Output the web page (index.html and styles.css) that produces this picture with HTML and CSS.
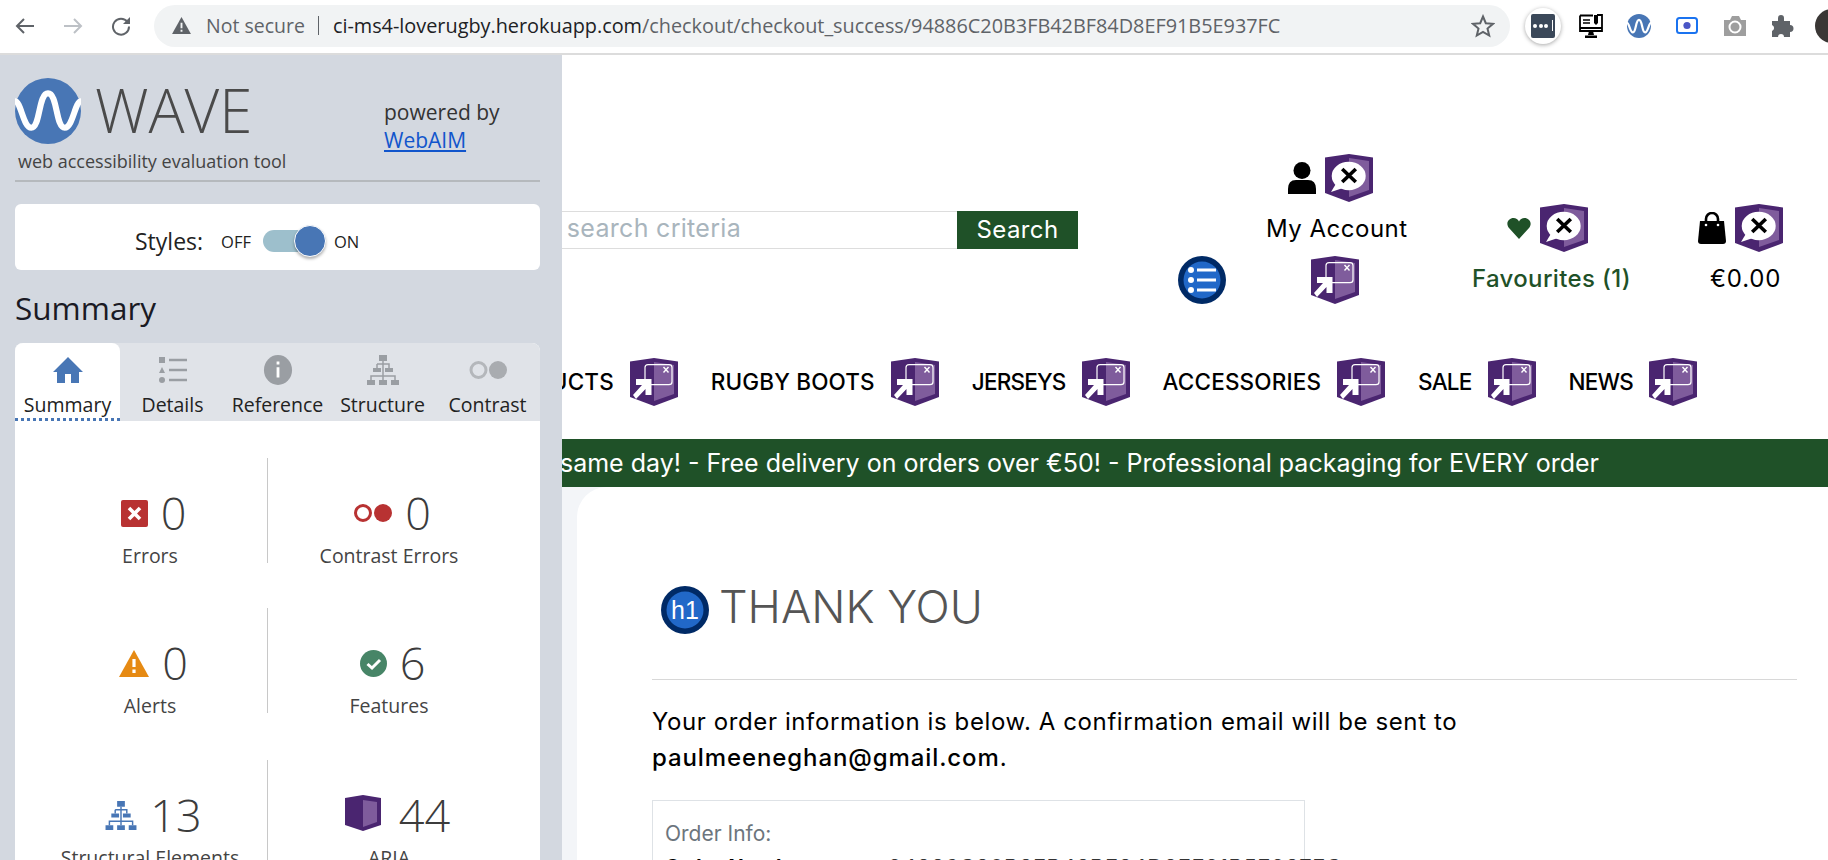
FILE: index.html
```html
<!DOCTYPE html>
<html lang="en">
<head>
<meta charset="UTF-8">
<meta name="viewport" content="width=device-width, initial-scale=1.0">
<title>Love Rugby - Checkout success</title>
<link rel="stylesheet" href="styles.css">
</head>
<body>

<svg class="defs" width="0" height="0">
    <symbol id="shield-alert" viewBox="0 0 48 48">
        <path d="M0 3.5 L24 0 L48 3.5 V39 L24 48 L0 39 Z" fill="#4a2570"/>
        <path d="M24 4 L44 7 V36 L24 43 Z" fill="#7f5c9c"/>
        <ellipse cx="23.7" cy="22" rx="17" ry="14.2" fill="#fff"/>
        <path d="M6 38 L12 28 L18 34 Z" fill="#fff"/>
        <path d="M17.2 15 L30.8 28 M30.8 15 L17.2 28" stroke="#000" stroke-width="3.6" fill="none"/>
    </symbol>
    <symbol id="shield-ext" viewBox="0 0 48 48">
        <path d="M0 3.5 L24 0 L48 3.5 V39 L24 48 L0 39 Z" fill="#4a2570"/>
        <path d="M24 4 L44 7 V36 L24 43 Z" fill="#7f5c9c"/>
        <path d="M15 21 V9.5 Q15 6.7 18 6.7 H39 Q42 6.7 42 9.5 V24 Q42 26.7 39 26.7 H21" stroke="#fff" stroke-width="1.2" fill="none"/>
        <path d="M33.5 9 L38.5 14.5 M38.5 9 L33.5 14.5" stroke="#fff" stroke-width="1.4" fill="none"/>
        <path d="M6 21 H21.5 V37 H15.5 V31 L6 41 L3 37 L12 27 H6 Z" fill="#fff"/>
    </symbol>
</svg>

<div class="toolbar">
    <svg class="nav-btn" viewBox="0 0 20 20"><path d="M19 10 H2 M9 3 L2 10 L9 17" stroke="#5f6368" stroke-width="2" fill="none"/></svg>
    <svg class="nav-btn" viewBox="0 0 20 20"><path d="M1 10 H18 M11 3 L18 10 L11 17" stroke="#bdc1c6" stroke-width="2" fill="none"/></svg>
    <svg class="nav-btn" viewBox="0 0 20 20"><path d="M16.5 6 A8 8 0 1 0 18 10.5" stroke="#5f6368" stroke-width="2" fill="none"/><path d="M19 1 V8 H12 Z" fill="#5f6368"/></svg>

    <div class="omnibox">
        <svg class="warn" viewBox="0 0 20 18"><path d="M10 0 L20 18 H0 Z" fill="#5f6368"/><path d="M9 6 H11 V12 H9 Z M9 13.5 H11 V15.5 H9 Z" fill="#f1f3f4"/></svg>
        <span class="not-secure">Not secure</span>
        <span class="url-sep"></span>
        <span class="url"><b>ci-ms4-loverugby.herokuapp.com</b>/checkout/checkout_success/94886C20B3FB42BF84D8EF91B5E937FC</span>
        <svg class="star" viewBox="0 0 24 24"><path d="M12 2.5 L14.8 9.2 L22 9.8 L16.5 14.5 L18.2 21.5 L12 17.8 L5.8 21.5 L7.5 14.5 L2 9.8 L9.2 9.2 Z" stroke="#5f6368" stroke-width="2" fill="none"/></svg>
    </div>

    <div class="ext-pass"><span class="pass-box"><i></i><i></i><i></i><em></em></span></div>
    <div class="ext">
        <svg width="24" height="24" viewBox="0 0 24 24"><path d="M1 1.5 H14 M18 1 H23 V17 H1 V1.5 M1 14 H23" stroke="#000" stroke-width="1.8" fill="none"/><path d="M4 6 H11 M4 9 H11" stroke="#000" stroke-width="1.3"/><path d="M15 1 H19 V9 L17 11 L15 9 Z" fill="#000"/><path d="M10 17 H14 L15 21 H9 Z M6 21.5 H18 V24 H6 Z" fill="#000"/></svg>
    </div>
    <div class="ext">
        <svg width="24" height="24" viewBox="0 0 65 65"><circle cx="32.5" cy="32.5" r="32.5" fill="#4876b5"/><path d="M0 24 C6 24 8 50 16 50 C25 50 23 16 32.5 16 C42 16 40 50 49 50 C57 50 59 24 65 24" stroke="#fff" stroke-width="6" fill="none"/></svg>
    </div>
    <div class="ext">
        <svg width="22" height="17" viewBox="0 0 22 17"><rect x="1" y="1" width="20" height="15" rx="2.5" fill="none" stroke="#1a73f0" stroke-width="2"/><circle cx="11" cy="8.5" r="3.6" fill="#4a56c6"/></svg>
    </div>
    <div class="ext">
        <svg width="22" height="20" viewBox="0 0 22 20"><path d="M0 4 H6 L8 0 H15 L17 4 H22 V20 H0 Z" fill="#9e9e9e"/><circle cx="11" cy="11" r="5.5" fill="none" stroke="#fff" stroke-width="2"/></svg>
    </div>
    <div class="ext">
        <svg width="22" height="22" viewBox="0 0 22 22"><path d="M0 6 H6 V3 A3 3 0 0 1 12 3 V6 H18 V10 A3 3 0 0 1 18 17 V22 H12 A3 3 0 0 0 6 22 H0 V16 A3.2 3.2 0 0 0 0 10 Z" fill="#5f6368"/></svg>
    </div>
    <div class="avatar"></div>
</div>

<div class="layout">
    <aside class="wave">
        <div class="brand">
            <div class="brand-left">
                <div class="logo-row">
                    <svg width="66" height="66" viewBox="0 0 65 65"><circle cx="32.5" cy="32.5" r="32.5" fill="#4876b5"/><path d="M0 23 C6 23 8 49 16 49 C25 49 23 15 32.5 15 C42 15 40 49 49 49 C57 49 59 23 65 23" stroke="#fff" stroke-width="6" fill="none"/></svg>
                    <span class="logo-text">WAVE</span>
                </div>
                <div class="tagline">web accessibility evaluation tool</div>
            </div>
            <div class="powered">powered by<br><a href="#">WebAIM</a></div>
        </div>

        <div class="styles-card">
            <span class="styles-label">Styles:</span>
            <span class="switch-text">OFF</span>
            <span class="track"><span class="knob"></span></span>
            <span class="switch-text">ON</span>
        </div>

        <h2 class="summary-title">Summary</h2>

        <div class="panel">
            <div class="tabs">
                <div class="tab active">
                    <svg width="30" height="26" viewBox="0 0 30 26"><path d="M15 0 L30 15 H26 V26 H18 V17 H12 V26 H4 V15 H0 Z" fill="#4876b5"/></svg>
                    <span>Summary</span>
                </div>
                <div class="tab">
                    <svg width="28" height="26" viewBox="0 0 28 26"><path d="M0 0 H6 V6 H0 Z M3 10 L6 16 H0 Z" fill="#9a9ea3"/><circle cx="3" cy="23" r="3" fill="#9a9ea3"/><path d="M10 3 H28 M10 13 H28 M10 23 H28" stroke="#9a9ea3" stroke-width="2.6"/></svg>
                    <span>Details</span>
                </div>
                <div class="tab">
                    <svg width="30" height="32" viewBox="0 0 30 32"><ellipse cx="15" cy="16" rx="15" ry="16" fill="#9a9ea3"/><path d="M13.5 7 H16.5 V10 H13.5 Z M13.5 13 H16.5 V24 H13.5 Z" fill="#fff"/></svg>
                    <span>Reference</span>
                </div>
                <div class="tab">
                    <svg width="32" height="30" viewBox="0 0 32 30"><path d="M12 0 H20 V6 H12 Z M6 13 H14 V17 H6 Z M18 13 H26 V17 H18 Z M0 25 H8 V30 H0 Z M12 25 H20 V30 H12 Z M24 25 H32 V30 H24 Z" fill="#9a9ea3"/><path d="M16 6 V25 M10 9 H22 V13 M10 9 V13 M4 25 V21 H28 V25" stroke="#9a9ea3" stroke-width="1.5" fill="none"/></svg>
                    <span>Structure</span>
                </div>
                <div class="tab">
                    <svg width="38" height="20" viewBox="0 0 38 20"><circle cx="9.5" cy="10" r="7.5" fill="none" stroke="#b4b7bb" stroke-width="3"/><circle cx="29" cy="10" r="9" fill="#a9acb0"/></svg>
                    <span>Contrast</span>
                </div>
            </div>

            <div class="stats">
                <div class="stat left">
                    <div class="stat-top">
                        <svg width="27" height="27" viewBox="0 0 27 27"><rect width="27" height="27" rx="2" fill="#b83232"/><path d="M8 8 L19 19 M19 8 L8 19" stroke="#fff" stroke-width="3.6"/></svg>
                        <span class="num">0</span>
                    </div>
                    <div class="stat-label">Errors</div>
                </div>
                <div class="stat right">
                    <div class="stat-top">
                        <svg width="38" height="20" viewBox="0 0 38 20"><circle cx="9" cy="10" r="7.5" fill="none" stroke="#b83232" stroke-width="3"/><circle cx="29" cy="10" r="9" fill="#b83232"/></svg>
                        <span class="num">0</span>
                    </div>
                    <div class="stat-label">Contrast Errors</div>
                </div>
                <div class="stat left">
                    <div class="stat-top">
                        <svg width="30" height="27" viewBox="0 0 30 27"><path d="M15 0 L30 27 H0 Z" fill="#e68a13"/><path d="M13.4 9 H16.6 V17 H13.4 Z M13.4 19.5 H16.6 V23 H13.4 Z" fill="#fff"/></svg>
                        <span class="num">0</span>
                    </div>
                    <div class="stat-label">Alerts</div>
                </div>
                <div class="stat right">
                    <div class="stat-top">
                        <svg width="27" height="27" viewBox="0 0 27 27"><circle cx="13.5" cy="13.5" r="13.5" fill="#478567"/><path d="M7.5 14 L12 18 L20 10" stroke="#fff" stroke-width="3" fill="none"/></svg>
                        <span class="num">6</span>
                    </div>
                    <div class="stat-label">Features</div>
                </div>
                <div class="stat left last">
                    <div class="stat-top">
                        <svg width="32" height="29" viewBox="0 0 32 30"><path d="M12 0 H20 V6 H12 Z M6 13 H14 V17 H6 Z M18 13 H26 V17 H18 Z M0 25 H8 V30 H0 Z M12 25 H20 V30 H12 Z M24 25 H32 V30 H24 Z" fill="#4876b5"/><path d="M16 6 V25 M10 9 H22 V13 M10 9 V13 M4 25 V21 H28 V25" stroke="#4876b5" stroke-width="1.5" fill="none"/></svg>
                        <span class="num">13</span>
                    </div>
                    <div class="stat-label">Structural Elements</div>
                </div>
                <div class="stat right last aria">
                    <div class="stat-top">
                        <svg width="36" height="36" viewBox="0 0 36 36"><path d="M0 3 L18 0 L36 3 V30 L18 36 L0 30 Z" fill="#4a2570"/><path d="M18 5 L32 7 V27 L18 32 Z" fill="#7f5c9c"/></svg>
                        <span class="num">44</span>
                    </div>
                    <div class="stat-label">ARIA</div>
                </div>
            </div>
        </div>
    </aside>

    <main class="site">
        <div class="head">
            <form class="search">
                <span class="search-input">Enter search criteria</span>
                <button class="search-btn" type="button">Search</button>
            </form>
            <div class="account">
                <div class="account-icons">
                    <svg width="28" height="32" viewBox="0 0 28 32"><circle cx="14" cy="8.5" r="8.5" fill="#000"/><path d="M0 32 V27 Q0 18 8 18 H20 Q28 18 28 27 V32 Z" fill="#000"/></svg>
                    <svg class="shield"><use href="#shield-alert"/></svg>
                </div>
                <div class="account-text">My Account</div>
                <div class="account-foot">
                    <svg width="48" height="48" viewBox="0 0 48 48"><circle cx="24" cy="24" r="24" fill="#002a66"/><circle cx="24" cy="24" r="18.5" fill="#2168c8"/><circle cx="13" cy="14" r="3" fill="#fff"/><circle cx="13" cy="24" r="3" fill="#fff"/><circle cx="13" cy="34" r="3" fill="#fff"/><path d="M19 14 H38 M19 24 H38 M19 34 H38" stroke="#fff" stroke-width="3.2"/></svg>
                    <svg class="shield"><use href="#shield-ext"/></svg>
                </div>
            </div>
            <div class="favs">
                <div class="favs-icons">
                    <svg width="24" height="21" viewBox="0 0 24 21"><path d="M12 21 L2 10 C-2 5 2 0 6.5 0 C9 0 11 1.5 12 3.5 C13 1.5 15 0 17.5 0 C22 0 26 5 22 10 Z" fill="#1f5128"/></svg>
                    <svg class="shield"><use href="#shield-alert"/></svg>
                </div>
                <div class="favs-text">Favourites (1)</div>
            </div>
            <div class="bag">
                <div class="bag-icons">
                    <svg width="28" height="32" viewBox="0 0 28 32"><path d="M2 9 H26 L28 29 Q28 32 25 32 H3 Q0 32 0 29 Z" fill="#000"/><path d="M8 13 V7 A6 6 0 0 1 20 7 V13" stroke="#000" stroke-width="2.6" fill="none"/><circle cx="8" cy="13" r="1.3" fill="#fff"/><circle cx="20" cy="13" r="1.3" fill="#fff"/></svg>
                    <svg class="shield"><use href="#shield-alert"/></svg>
                </div>
                <div class="bag-text">€0.00</div>
            </div>
        </div>

        <nav class="menu">
            <a class="menu-item">PRODUCTS <svg class="shield"><use href="#shield-ext"/></svg></a>
            <a class="menu-item">RUGBY BOOTS <svg class="shield"><use href="#shield-ext"/></svg></a>
            <a class="menu-item tight">JERSEYS <svg class="shield"><use href="#shield-ext"/></svg></a>
            <a class="menu-item">ACCESSORIES <svg class="shield"><use href="#shield-ext"/></svg></a>
            <a class="menu-item tight">SALE <svg class="shield"><use href="#shield-ext"/></svg></a>
            <a class="menu-item tight">NEWS <svg class="shield"><use href="#shield-ext"/></svg></a>
        </nav>

        <div class="banner"><span>same day! - Free delivery on orders over €50! - Professional packaging for EVERY order</span></div>

        <div class="page-body">
            <div class="card">
                <div class="title-row">
                    <svg width="48" height="48" viewBox="0 0 48 48"><circle cx="24" cy="24" r="24" fill="#002a66"/><circle cx="24" cy="24" r="18.5" fill="#2168c8"/><text class="h1-badge" x="24" y="33" text-anchor="middle">h1</text></svg>
                    <h1>THANK YOU</h1>
                </div>
                <hr>
                <p class="intro">Your order information is below. A confirmation email will be sent to<br><strong>paulmeeneghan@gmail.com</strong>.</p>
                <div class="order-box">
                    <p class="order-label">Order Info:</p>
                    <div class="order-row"><strong>Order Number</strong><span>94886C20B3FB42BF84D8EF91B5E937FC</span></div>
                </div>
            </div>
        </div>
    </main>
</div>

</body>
</html>
```

FILE: styles.css
```css
* {
    box-sizing: border-box;
}
body {
    margin: 0;
    height: 100vh;
    overflow: hidden;
    display: flex;
    flex-direction: column;
    background-color: #fff;
    font-family: 'Open Sans', sans-serif;
}
.defs {
    display: block;
    height: 0;
}

/* browser bar */
.toolbar {
    height: 55px;
    flex: none;
    display: flex;
    align-items: center;
    gap: 24px;
    padding: 0 0 2px 15px;
    border-bottom: 2px solid #dcdcdc;
    overflow: hidden;
}
.nav-btn {
    width: 20px;
    height: 20px;
    flex: none;
    margin-right: 4px;
}
.omnibox {
    width: 1356px;
    height: 42px;
    flex: none;
    margin-left: -5px;
    margin-right: -9px;
    border-radius: 21px;
    background-color: #f1f3f4;
    display: flex;
    align-items: center;
    padding-left: 18px;
    color: #5f6368;
    font-size: 19.5px;
    white-space: nowrap;
}
.warn {
    width: 19px;
    height: 17px;
    flex: none;
    margin-right: 15px;
}
.url-sep {
    width: 1px;
    height: 19px;
    margin: 0 14px 0 13px;
    background-color: #5f6368;
}
.url {
    font-size: 19.85px;
}
.url b {
    font-weight: 400;
    color: #202124;
}
.star {
    width: 24px;
    height: 24px;
    margin-left: auto;
    margin-right: 15px;
}
.ext-pass {
    width: 36px;
    height: 36px;
    flex: none;
    margin-right: -6px;
    border-radius: 50%;
    background-color: #fff;
    box-shadow: 0 1px 4px rgba(0,0,0,0.35);
    display: flex;
    align-items: center;
    justify-content: center;
}
.pass-box {
    width: 24px;
    height: 24px;
    border-radius: 2px;
    background-color: #3b4859;
    display: flex;
    align-items: center;
    justify-content: center;
    gap: 1.5px;
}
.pass-box i {
    width: 4px;
    height: 4px;
    border-radius: 50%;
    background-color: #fff;
}
.pass-box em {
    width: 1px;
    height: 11px;
    margin-left: 2px;
    background-color: #fff;
}
.ext {
    width: 24px;
    height: 24px;
    flex: none;
    display: flex;
    align-items: center;
    justify-content: center;
}
.avatar {
    width: 34px;
    height: 34px;
    flex: none;
    margin-left: -4px;
    border-radius: 50%;
    background-color: #3a3735;
}

.layout {
    flex: 1;
    min-height: 0;
    display: flex;
}

/* wave sidebar */
.wave {
    width: 562px;
    flex: none;
    padding: 0 22px 0 15px;
    background-color: #d3d8e0;
    overflow: hidden;
}
.brand {
    height: 127px;
    display: flex;
    border-bottom: 2px solid #b5b9bd;
}
.brand-left {
    width: 369px;
    flex: none;
    padding-top: 23px;
}
.logo-row {
    height: 65px;
    display: flex;
    align-items: center;
    gap: 14px;
}
.logo-text {
    font-size: 60px;
    font-weight: 300;
    line-height: 65px;
    color: #4a4a4a;
}
.tagline {
    margin-left: 3px;
    font-size: 18px;
    line-height: 36px;
    color: #444;
}
.powered {
    padding-top: 43px;
    font-size: 21px;
    line-height: 28px;
    color: #333;
}
.powered a {
    color: #1155cc;
}
.styles-card {
    height: 66px;
    margin-top: 22px;
    padding: 8px 0 0 120px;
    display: flex;
    align-items: center;
    border-radius: 6px;
    background-color: #fff;
}
.styles-label {
    font-size: 23px;
    color: #222;
    margin-right: 18px;
}
.switch-text {
    font-size: 16.5px;
    color: #222;
}
.track {
    width: 60px;
    height: 22px;
    margin: 0 11px 0 12px;
    border-radius: 11px;
    background-color: #9dbfcc;
    display: flex;
    align-items: center;
    justify-content: flex-end;
}
.knob {
    width: 32px;
    height: 32px;
    flex: none;
    margin-right: -3px;
    border-radius: 50%;
    background-color: #4876b5;
    border: 1px solid #fff;
    box-shadow: 0 2px 3px rgba(0,0,0,0.3);
}
.summary-title {
    margin: 18px 0 15px;
    font-size: 31.5px;
    font-weight: 400;
    line-height: 40px;
    color: #1a1a24;
}
.panel {
    border-radius: 8px 8px 0 0;
    background-color: #fff;
}
.tabs {
    height: 78px;
    display: flex;
    border-radius: 8px 8px 0 0;
    background-color: #e0e3e8;
}
.tab {
    width: 105px;
    padding-top: 12px;
    display: flex;
    flex-direction: column;
    align-items: center;
    font-size: 19.5px;
    color: #222;
}
.tab svg {
    height: 30px;
    flex: none;
}
.tab span {
    margin-top: 7px;
    line-height: 26px;
}
.tab.active {
    border-radius: 8px 8px 0 0;
    background-color: #fff;
    border-bottom: 3px dotted #4876b5;
}
.stats {
    padding-top: 37px;
    display: grid;
    grid-template-columns: 253px 272px;
    grid-auto-rows: 105px;
    row-gap: 45px;
}
.stat {
    display: flex;
    flex-direction: column;
    align-items: center;
}
.stat.left {
    padding-left: 18px;
    border-right: 1px solid #c8c8c8;
}
.stat.right {
    padding-right: 30px;
}
.stat.last {
    margin-top: 2px;
}
.stat-top {
    height: 42px;
    margin-top: 34px;
    margin-left: 7px;
    display: flex;
    align-items: center;
    gap: 13px;
}
.stat.aria .stat-top {
    margin-left: 17px;
    gap: 18px;
}
.stat.aria svg {
    margin-bottom: 4px;
}
.num {
    font-size: 45px;
    font-weight: 300;
    line-height: 42px;
    color: #3c3c3c;
}
.stat-label {
    margin-top: 10px;
    font-size: 19.5px;
    line-height: 24px;
    color: #444;
    white-space: nowrap;
}

/* site behind the sidebar */
.site {
    flex: 1;
    min-width: 0;
    overflow: hidden;
    font-family: 'Inter', sans-serif;
    color: #000;
}
.shield {
    width: 48px;
    height: 48px;
    flex: none;
}
.head {
    height: 303px;
    display: flex;
    justify-content: flex-end;
    padding-right: 45px;
}
.search {
    flex: none;
    margin-top: 156px;
    height: 38px;
    display: flex;
    align-self: flex-start;
}
.search-input {
    width: 480px;
    padding-right: 216px;
    border-top: 1px solid #ddd;
    border-bottom: 1px solid #ddd;
    font-size: 25px;
    letter-spacing: 0.3px;
    line-height: 33px;
    color: #a9b5bd;
    text-align: right;
    white-space: nowrap;
}
.search-btn {
    width: 121px;
    border: none;
    background-color: #1f5128;
    color: #fff;
    font-family: inherit;
    font-size: 24px;
    letter-spacing: 0.4px;
    padding-bottom: 3px;
}
.account {
    width: 228px;
    flex: none;
    margin-left: 100px;
    padding-top: 99px;
}
.account-icons {
    height: 48px;
    padding-left: 110px;
    display: flex;
    align-items: center;
    gap: 9px;
}
.account-text {
    height: 54px;
    padding-left: 88px;
    font-size: 24px;
    letter-spacing: 0.5px;
    line-height: 54px;
    white-space: nowrap;
}
.account-foot {
    display: flex;
    gap: 85px;
}
.favs {
    width: 158px;
    flex: none;
    margin-left: 66px;
    padding-top: 149px;
}
.favs-icons {
    height: 48px;
    padding-left: 35px;
    display: flex;
    align-items: center;
    gap: 9px;
}
.favs-text {
    font-size: 24px;
    font-weight: 500;
    letter-spacing: 0.35px;
    line-height: 54px;
    color: #1f5128;
    white-space: nowrap;
}
.bag {
    width: 85px;
    flex: none;
    margin-left: 68px;
    padding-top: 149px;
}
.bag-icons {
    height: 48px;
    display: flex;
    align-items: center;
    gap: 9px;
}
.bag-text {
    padding-left: 12px;
    font-size: 24px;
    letter-spacing: 0.8px;
    line-height: 54px;
}
.menu {
    height: 81px;
    padding-right: 131px;
    display: flex;
    justify-content: flex-end;
    align-items: flex-start;
    gap: 33px;
}
.menu-item {
    flex: none;
    height: 48px;
    display: flex;
    align-items: center;
    gap: 16px;
    font-size: 22.5px;
    font-weight: 500;
    letter-spacing: 0.15px;
    line-height: 44px;
    white-space: nowrap;
}
.menu-item.tight {
    letter-spacing: -0.8px;
}
.banner {
    height: 48px;
    padding-right: 229px;
    display: flex;
    justify-content: flex-end;
    align-items: center;
    background-color: #1f5128;
    color: #fff;
    font-size: 25px;
    white-space: nowrap;
}
.banner span {
    flex: none;
}
.page-body {
    padding-left: 15px;
    height: 400px;
    background-color: #f3f5f8;
}
.card {
    height: 100%;
    padding: 99px 31px 0 75px;
    border-top-left-radius: 30px;
    background-color: #fff;
}
.title-row {
    height: 48px;
    display: flex;
    align-items: center;
    gap: 10px;
    margin-left: 9px;
}
.title-row h1 {
    margin: 0 0 7px;
    font-size: 45px;
    font-weight: 300;
    line-height: 48px;
    color: #555;
}
.h1-badge {
    font-family: 'Liberation Sans', sans-serif;
    font-size: 25px;
    fill: #fff;
}
.card hr {
    margin: 45px 0 0;
    border: none;
    border-top: 1px solid #d8d8d8;
}
.intro {
    margin: 24px 0 24px;
    font-size: 24px;
    letter-spacing: 0.6px;
    line-height: 36px;
}
.intro strong {
    font-weight: 500;
    letter-spacing: 0.9px;
}
.order-box {
    width: 653px;
    height: 120px;
    padding: 18px 12px;
    border: 1px solid #dee2e6;
}
.order-label {
    margin: 0 0 6px;
    font-size: 21px;
    line-height: 30px;
    color: #6c757d;
}
.order-row {
    display: flex;
    font-size: 22px;
    letter-spacing: 0.5px;
    line-height: 24px;
    white-space: nowrap;
}
.order-row strong {
    width: 223px;
    flex: none;
    font-size: 20px;
}
.order-row span {
    color: #333;
}
```
